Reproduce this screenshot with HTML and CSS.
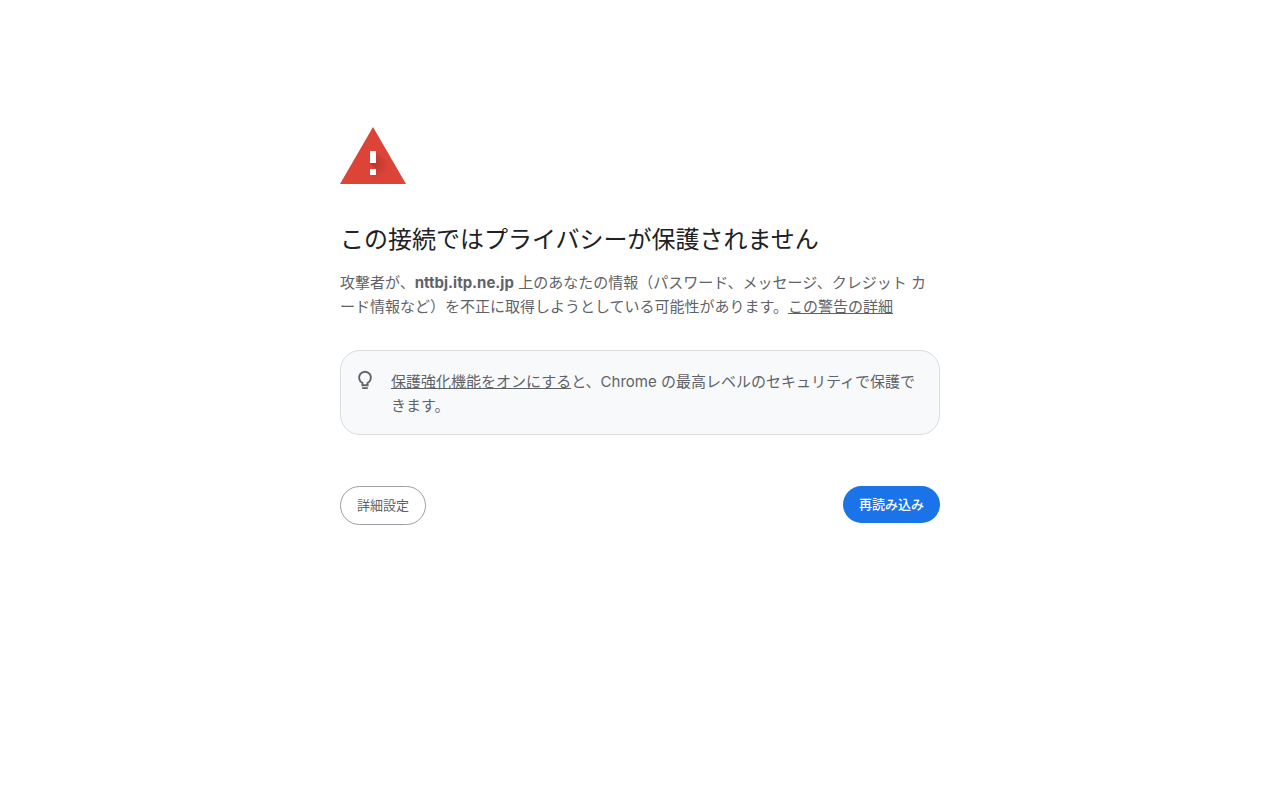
FILE: index.html
```html
<!DOCTYPE html>
<html lang="ja" dir="ltr">
  <head>
    <meta charset="utf-8">
    <meta name="viewport" content="width=device-width, initial-scale=1">
    <title>プライバシー エラー</title>
    <link rel="stylesheet" href="styles.css">
  </head>

  <body>

    <main class="interstitial">

      <svg class="warning-icon" viewBox="0 0 72 72" aria-hidden="true">
        <defs>
          <radialGradient id="shade" gradientUnits="userSpaceOnUse" cx="34" cy="44" r="15">
            <stop offset="0" stop-color="#8c2a20" stop-opacity=".45"/>
            <stop offset="1" stop-color="#8c2a20" stop-opacity="0"/>
          </radialGradient>
        </defs>
        <path fill="#db4437" d="M33 7l33 57H0z"/>
        <path fill="url(#shade)" d="M36 31l14 14v19H39l-9-9 6-6-6-6z"/>
        <path fill="#fff" d="M30 31h6v12h-6zM30 49h6v6h-6z"/>
      </svg>

      <h1>この接続ではプライバシーが保護されません</h1>

      <p>攻撃者が、<strong>nttbj.itp.ne.jp</strong> 上のあなたの情報（パスワード、メッセージ、クレジット カード情報など）を不正に取得しようとしている可能性があります。<a href="#">この警告の詳細</a></p>

      <div class="promo">
        <svg class="bulb" viewBox="0 2 24 24" aria-hidden="true">
          <path fill="none" stroke="#5f6368" stroke-width="1.9" d="M9.4 17.2v-2.3A5.9 5.9 0 1 1 14.6 14.9v2.3z"/>
          <path fill="#5f6368" d="M9 19.2h6v.6c0 .8-.6 1.2-1.2 1.2h-3.6c-.6 0-1.2-.4-1.2-1.2z"/>
        </svg>
        <div><a href="#">保護強化機能をオンにする</a>と、Chrome の最高レベルのセキュリティで保護できます。</div>
      </div>

      <div class="buttons">
        <button type="button" class="details">詳細設定</button>
        <button type="button" class="reload">再読み込み</button>
      </div>

    </main>

  </body>
</html>
```

FILE: styles.css
```css
body {
  margin: 0;
  background: #fff;
  color: #5f6368;
  font-family: Inter, "Noto Sans CJK JP", sans-serif;
  font-size: 15px;
  line-height: 24px;
}

.interstitial {
  box-sizing: border-box;
  max-width: 600px;
  margin: 0 auto;
  padding-top: 120px;
}

.warning-icon {
  display: block;
  width: 72px;
  height: 72px;
  margin-bottom: 33px;
}

h1 {
  margin: 0 0 16px;
  color: #202124;
  font-size: 24px;
  font-weight: 400;
  line-height: 30px;
}

p {
  margin: 0;
}

a {
  color: inherit;
  text-decoration: underline;
}

.promo {
  display: flex;
  gap: 14px;
  margin-top: 31px;
  padding: 19px 16px 16px 12px;
  border: 1px solid #dadce0;
  border-radius: 20px;
  background: #f8f9fb;
}

.bulb {
  flex: none;
  width: 24px;
  height: 24px;
}

.buttons {
  display: flex;
  justify-content: space-between;
  align-items: flex-start;
  margin-top: 51px;
}

button {
  padding: 8px 16px;
  border: 0;
  border-radius: 20px;
  font-family: inherit;
  font-size: 13px;
  line-height: 21px;
  cursor: pointer;
}

.details {
  border: 1px solid #9aa0a6;
  background: #fff;
  color: #5f6368;
}

.reload {
  background: #1a73e8;
  color: #fff;
  font-weight: 500;
}
```
